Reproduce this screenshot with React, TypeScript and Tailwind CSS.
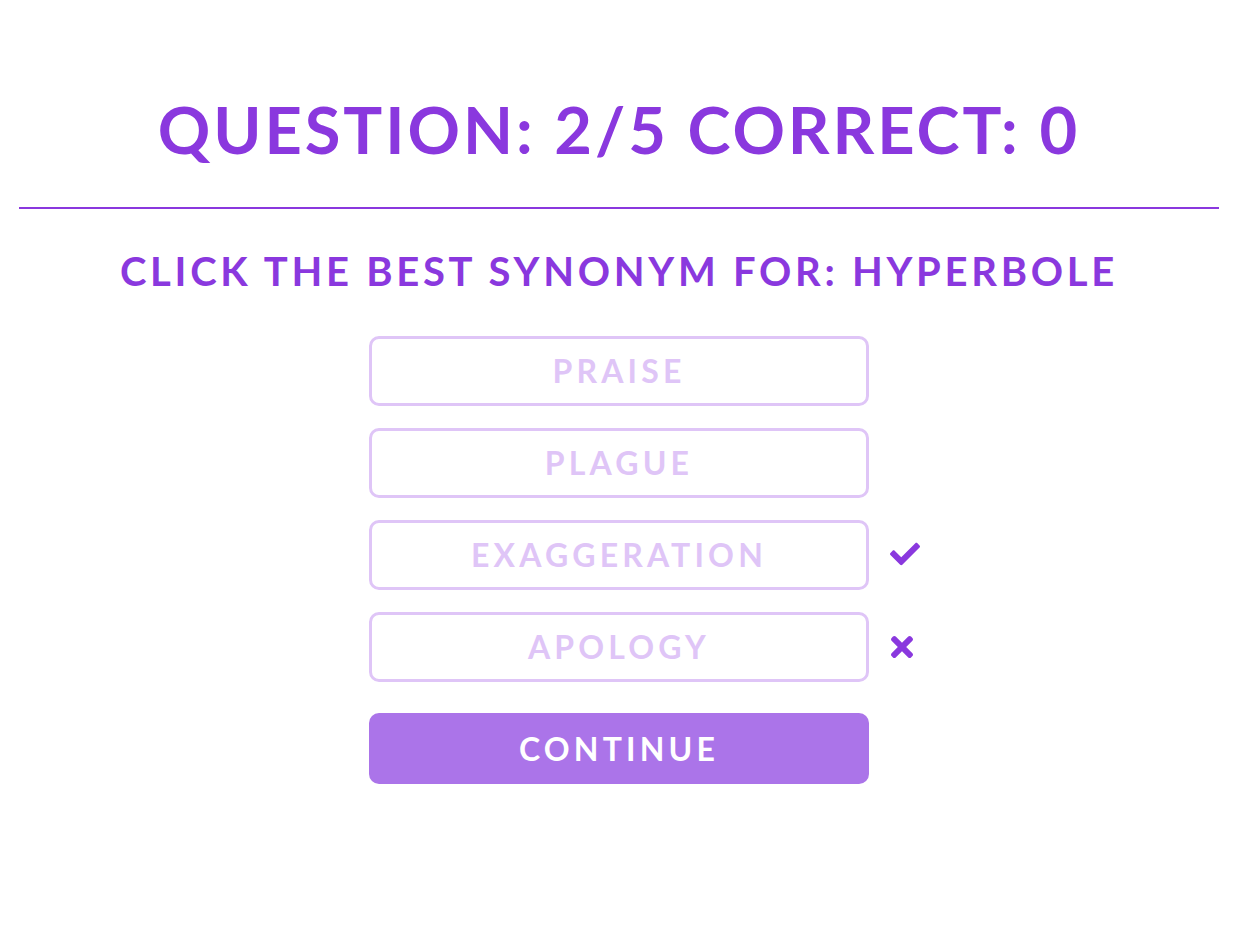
import React from "react";
import { FaCheck, FaTimes } from "react-icons/fa";

const options = [
  { label: "PRAISE", mark: null },
  { label: "PLAGUE", mark: null },
  { label: "EXAGGERATION", mark: "right" },
  { label: "APOLOGY", mark: "wrong" },
];

const App = () => {
  return (
    <div
      className="bg-white min-h-screen pt-[97px]"
      style={{ fontFamily: "Lato, 'Open Sans', sans-serif" }}
    >
      <h1 className="text-center text-[65px] leading-none font-bold tracking-[0.045em] text-[#8a38de]">
        QUESTION: 2/5 CORRECT: 0
      </h1>
      <div className="mx-[19px] mt-[45px] h-[2px] bg-[#8a38de]" />
      <h2 className="mt-[42px] text-center text-[40px] leading-none font-bold tracking-[0.093em] text-[#8a38de]">
        CLICK THE BEST SYNONYM FOR: HYPERBOLE
      </h2>

      <div className="mt-[45px] flex flex-col items-center gap-[22px]">
        {options.map((opt) => (
          <div key={opt.label} className="relative">
            <button className="w-[500px] h-[70px] rounded-[10px] border-[3px] border-[#dfc5f7] bg-white text-[32px] font-bold tracking-[0.13em] text-[#dfc5f7]">
              {opt.label}
            </button>
            {opt.mark === "right" && (
              <FaCheck className="absolute left-[521px] top-[19px] w-[30px] h-[30px] text-[#8a38de]" />
            )}
            {opt.mark === "wrong" && (
              <FaTimes className="absolute left-[522px] top-[19px] w-[22px] h-[32px] text-[#8a38de]" />
            )}
          </div>
        ))}
        <button className="mt-[9px] w-[500px] h-[71px] rounded-[10px] bg-[#ab74e9] text-[32px] font-bold tracking-[0.13em] text-white">
          CONTINUE
        </button>
      </div>
    </div>
  );
};

export default App;
